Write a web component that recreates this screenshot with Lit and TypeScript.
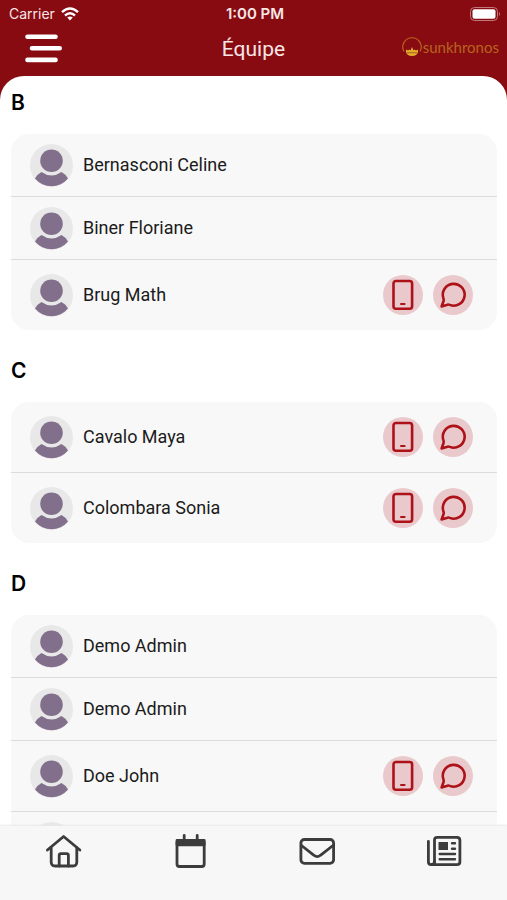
import { LitElement, html, css, svg } from "lit";
import { customElement, property } from "lit/decorators.js";

interface Person {
  name: string;
  reachable?: boolean;
}

interface Group {
  letter: string;
  people: Person[];
}

const GROUPS: Group[] = [
  {
    letter: "B",
    people: [
      { name: "Bernasconi Celine" },
      { name: "Biner Floriane" },
      { name: "Brug Math", reachable: true },
    ],
  },
  {
    letter: "C",
    people: [
      { name: "Cavalo Maya", reachable: true },
      { name: "Colombara Sonia", reachable: true },
    ],
  },
  {
    letter: "D",
    people: [
      { name: "Demo Admin" },
      { name: "Demo Admin" },
      { name: "Doe John", reachable: true },
      { name: "" },
    ],
  },
];

const homeIcon = svg`
  <path d="M3.400 17 L19.600 3.500 L35.900 17" />
  <path d="M7.200 15 V29 Q7.200 33 11.200 33 H28.800 Q32.800 33 32.800 29 V15" />
  <path d="M15.200 33 V22.500 Q15.200 20.700 17 20.700 H22.600 Q24.400 20.700 24.400 22.500 V33" />`;

const calendarIcon = svg`
  <rect x="6" y="7.500" width="27.200" height="26" rx="2.500" />
  <path d="M6 7.500 H33.200 V11.800 H6 Z" fill="currentColor" />
  <path d="M13.200 2.500 V7 M26.200 2.500 V7" />`;

const mailIcon = svg`
  <rect x="2.900" y="6.500" width="32.700" height="23.800" rx="3.500" />
  <path d="M3.500 12.500 L16 22.300 Q19.200 25 22.400 22.300 L35 12.500" />`;

const newsIcon = svg`
  <path d="M9.500 29.500 V7 Q9.500 4.300 12.200 4.300 H32 Q34.900 4.300 34.900 7.200 V28.800 Q34.900 31.700 32 31.700 H6.200 Q3.400 31.700 3.400 28.800 V8.500" />
  <path d="M9.500 28.500 Q9.500 31.700 6.200 31.700" />
  <rect x="13.500" y="9" width="9.500" height="8" fill="currentColor" stroke="none" />
  <path d="M27 10.300 H30 M27 15.700 H30 M14.700 21 H30 M14.700 26.200 H30" stroke-width="2.400" />`;

@customElement("team-row")
class TeamRow extends LitElement {
  @property() name = "";
  @property({ type: Boolean }) reachable = false;

  static styles = css`
    :host {
      display: flex;
      align-items: center;
      gap: 10px;
      min-height: 62px;
      padding: 0 24px 0 19px;
    }
    :host([reachable]) {
      min-height: 70px;
    }
    .avatar {
      width: 43px;
      height: 43px;
      flex: none;
    }
    .name {
      flex: 1;
      font-family: Roboto, Inter, sans-serif;
      font-size: 18px;
      line-height: 20px;
      color: #1b1b1b;
    }
    .round {
      display: grid;
      place-items: center;
      width: 40px;
      height: 40px;
      padding: 0;
      border: 0;
      border-radius: 50%;
      background: #e9c9cc;
      color: #ad1219;
      cursor: pointer;
    }
    .round svg {
      width: 32px;
      height: 32px;
    }
  `;

  render() {
    return html`
      <svg class="avatar" viewBox="0 0 43 43" aria-hidden="true">
        <circle cx="21.5" cy="21.5" r="21.5" fill="#e9e8e9" />
        <circle cx="21.5" cy="16.700" r="11.300" fill="#826f8b" />
        <path
          d="M11.500 28 Q21.500 35 31.500 28 Q35.500 30 38 34.500 A21.500 21.500 0 0 1 5 34.500 Q7.500 30 11.500 28 Z"
          fill="#826f8b"
        />
      </svg>
      <span class="name">${this.name}</span>
      ${this.reachable
        ? html`
            <button class="round" aria-label="Appeler ${this.name}">
              <svg viewBox="0 0 32 32" fill="none" stroke="currentColor" stroke-width="2.6" stroke-linecap="round">
                <rect x="6.500" y="2" width="18.600" height="27.800" rx="2.500" />
                <path d="M14 25 H17.600" stroke-width="2" />
              </svg>
            </button>
            <button class="round" aria-label="Écrire à ${this.name}">
              <svg viewBox="0 0 32 32" fill="none" stroke="currentColor" stroke-width="2.6" stroke-linejoin="round">
                <path d="M6.400 19.200 A10.900 10.900 0 1 1 12.800 25.900 Q11.600 25.300 10.400 25.700 L4.600 27.400 L6.500 22.200 Q7 20.800 6.400 19.200 Z" />
              </svg>
            </button>
          `
        : null}
    `;
  }
}

@customElement("app-root")
class AppRoot extends LitElement {
  static styles = css`
    :host {
      display: flex;
      flex-direction: column;
      height: 100vh;
      font-family: Inter, "Noto Sans", sans-serif;
      background: #fff;
    }
    .header {
      flex: none;
      background: #870b11;
      color: #f8e6e6;
    }
    .status,
    .bar {
      display: grid;
      grid-template-columns: 1fr auto 1fr;
      align-items: center;
    }
    .status {
      height: 28px;
      padding: 0 6px 0 9px;
      font-size: 14px;
      line-height: 20px;
    }
    .carrier {
      display: flex;
      align-items: center;
      gap: 6px;
    }
    .wifi {
      width: 18px;
      height: 14px;
    }
    .time {
      font-size: 15px;
      font-weight: 600;
    }
    .battery {
      width: 31px;
      height: 14px;
      justify-self: end;
    }
    .bar {
      height: 48px;
      padding: 0 8px 8px 25px;
      box-sizing: border-box;
    }
    .menu {
      width: 37px;
      height: 29px;
      padding: 0;
      border: 0;
      background: none;
      color: #fff;
      cursor: pointer;
    }
    .menu svg,
    .tab svg {
      display: block;
    }
    .title {
      margin: 0;
      padding: 2px 17px 0 0;
      font-family: Roboto, Inter, sans-serif;
      font-size: 21px;
      line-height: 24px;
      font-weight: 400;
    }
    .brand {
      display: flex;
      align-items: center;
      justify-self: end;
      gap: 1px;
      padding-bottom: 2px;
      font-family: Lato, sans-serif;
      font-weight: 400;
      font-size: 15px;
      line-height: 20px;
      color: #b8641f;
    }
    .brand svg {
      width: 20px;
      height: 20px;
    }
    .scroll {
      flex: 1;
      min-height: 0;
      overflow-y: auto;
      scrollbar-width: none;
      background: linear-gradient(#870b11 24px, #fff 24px);
    }
    .sheet {
      border-radius: 24px 24px 0 0;
      background: #fff;
      padding: 0 10px 16px 11px;
    }
    .letter {
      margin: 0;
      padding: 15px 0 19px;
      font-size: 21px;
      line-height: 24px;
      font-weight: 600;
      color: #000;
    }
    .card {
      list-style: none;
      margin: 0 0 14px;
      padding: 0;
      border-radius: 18px;
      background: #f8f8f8;
    }
    .item + .item {
      border-top: 1px solid #dcdcdc;
    }
    .tabs {
      flex: none;
      display: grid;
      grid-template-columns: repeat(4, 1fr);
      height: 74px;
      background: #f7f7f7;
      box-shadow: 0 -1px 2px #e8e8e8;
      z-index: 1;
    }
    .tab {
      display: flex;
      justify-content: center;
      padding-top: 7px;
      color: #3c3c3c;
    }
  `;

  private tab(label: string, icon: unknown) {
    return html`
      <a class="tab" href="#" aria-label=${label}>
        <svg width="38" height="38" viewBox="0 0 38 38" fill="none" stroke="currentColor" stroke-width="2.800" stroke-linecap="round" stroke-linejoin="round">
          ${icon}
        </svg>
      </a>
    `;
  }

  render() {
    return html`
      <header class="header">
        <div class="status">
          <span class="carrier">
            Carrier
            <svg class="wifi" viewBox="0 0 18 14" fill="none" stroke="#fff" stroke-width="2.4" aria-hidden="true">
              <path d="M1 5.200 Q9 -2.200 17 5.200" />
              <path d="M4 8.500 Q9 4 14 8.500" />
              <path d="M9 13.500 L6.200 10.600 Q9 8.500 11.800 10.600 Z" fill="#fff" stroke="none" />
            </svg>
          </span>
          <span class="time">1:00 PM</span>
          <svg class="battery" viewBox="0 0 31 14" aria-hidden="true">
            <rect x="0.500" y="0.500" width="27" height="13" rx="4" fill="none" stroke="#c07a7e" />
            <rect x="2.500" y="2.200" width="23" height="9.600" rx="2" fill="#fff" />
            <path d="M29 5 Q31 7 29 9 Z" fill="#c07a7e" />
          </svg>
        </div>
        <div class="bar">
          <button class="menu" aria-label="Menu">
            <svg width="37" height="29" viewBox="0 0 37 29" stroke="#fff" stroke-width="4.600" stroke-linecap="round">
              <path d="M2.500 2.700 H30.500 M7 14.200 H34.700 M2.500 25.900 H30.500" />
            </svg>
          </button>
          <h1 class="title">Équipe</h1>
          <span class="brand">
            <svg viewBox="0 0 20 20" aria-hidden="true">
              <path d="M2 14.500 A9.200 9.200 0 1 1 18 14.500" fill="none" stroke="#b8641f" stroke-width="1.200" />
              <path d="M4 12.500 L6 13.500 L7.500 12.500 L8.500 13.500 L10 10 L11.500 13.500 L12.500 12.500 L14 13.500 L16 12.500 V15 Q15 19 10 19 Q5 19 4 15 Z" fill="#e3ae2e" />
              <path d="M5 15.800 H15" stroke="#a8501a" stroke-width="0.900" />
            </svg>
            sunkhronos
          </span>
        </div>
      </header>
      <main class="scroll">
        <div class="sheet">
          ${GROUPS.map(
            (group) => html`
              <section>
                <h2 class="letter">${group.letter}</h2>
                <ul class="card">
                  ${group.people.map(
                    (person) => html`
                      <li class="item">
                        <team-row .name=${person.name} ?reachable=${person.reachable}></team-row>
                      </li>
                    `
                  )}
                </ul>
              </section>
            `
          )}
        </div>
      </main>
      <nav class="tabs">
        ${this.tab("Accueil", homeIcon)} ${this.tab("Calendrier", calendarIcon)}
        ${this.tab("Messages", mailIcon)} ${this.tab("Actualités", newsIcon)}
      </nav>
    `;
  }
}
